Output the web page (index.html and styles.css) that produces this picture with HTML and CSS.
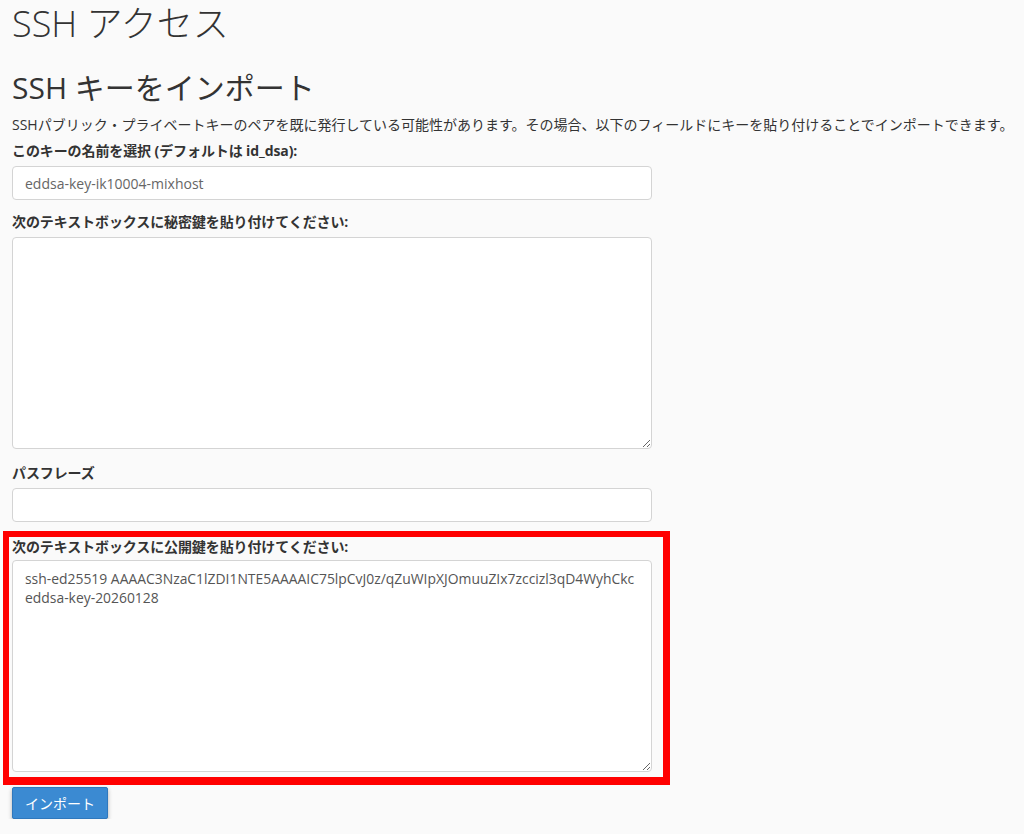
FILE: index.html
```html
<!DOCTYPE html>
<html lang="ja">
	<head>
		<meta charset="UTF-8">
		<meta name="viewport" content="width=device-width, initial-scale=1">
		<link rel="stylesheet" href="styles.css">
	</head>

	<body>
		<div class="page">
			<h1 class="pageTitle">SSH アクセス</h1>

			<h2 class="sectionTitle">SSH キーをインポート</h2>
			<p class="intro">SSHパブリック・プライベートキーのペアを既に発行している可能性があります。その場合、以下のフィールドにキーを貼り付けることでインポートできます。</p>

			<form class="importForm">
				<label class="fieldLabel" for="keyName">このキーの名前を選択 (デフォルトは id_dsa):</label>
				<input id="keyName" class="textInput" type="text" placeholder="eddsa-key-ik10004-mixhost">

				<label class="fieldLabel gapLarge" for="privateKey">次のテキストボックスに秘密鍵を貼り付けてください:</label>
				<textarea id="privateKey" class="textBox"></textarea>

				<label class="fieldLabel gapPass" for="passphrase">パスフレーズ</label>
				<input id="passphrase" class="textInput" type="password">

				<div class="highlight">
					<label class="fieldLabel" for="publicKey">次のテキストボックスに公開鍵を貼り付けてください:</label>
					<textarea id="publicKey" class="textBox textBoxInner">ssh-ed25519 AAAAC3NzaC1lZDI1NTE5AAAAIC75lpCvJ0z/qZuWIpXJOmuuZIx7zccizl3qD4WyhCkc
eddsa-key-20260128</textarea>
				</div>

				<button type="button" class="buttonImport">インポート</button>
			</form>
		</div>
	</body>
</html>
```

FILE: styles.css
```css
body {
	margin: 0;
	background-color: #fafafa;
	color: #333;
	font-family: "Open Sans", "Noto Sans CJK JP", sans-serif;
	font-size: 14px;
}

.page {
	padding: 0 12px;
}

/*---------------------------HEADINGS---------------------------*/
.pageTitle {
	margin: 2px 0 0 0;
	font-size: 36px;
	font-weight: 300;
	line-height: 44px;
	color: #333;
}

.sectionTitle {
	margin: 22px 0 0 0;
	font-size: 30px;
	font-weight: 400;
	line-height: 40px;
	color: #333;
}

.intro {
	margin: 7px 0 0 0;
	line-height: 20px;
	white-space: nowrap;
}

/*---------------------------FORM---------------------------*/
.importForm {
	display: flex;
	flex-direction: column;
	align-items: flex-start;
	width: 640px;
}

.fieldLabel {
	display: block;
	margin-top: 6px;
	font-weight: 700;
	line-height: 20px;
	letter-spacing: -0.1px;
}

.gapLarge {
	margin-top: 12px;
}

.gapPass {
	margin-top: 14px;
}

.textInput {
	margin-top: 5px;
	width: 640px;
	height: 34px;
	padding: 6px 12px;
	box-sizing: border-box;
	border: 1px solid #d4d4d4;
	border-radius: 4px;
	background-color: #fff;
	color: #555;
	font-family: inherit;
	font-size: 14px;
}

.textInput::placeholder {
	color: #666;
}

.textBox {
	margin-top: 5px;
	width: 640px;
	height: 212px;
	padding: 8px 12px;
	box-sizing: border-box;
	border: 1px solid #d4d4d4;
	border-radius: 4px;
	background-color: #fff;
	color: #555;
	font-family: inherit;
	font-size: 13.9px;
	line-height: 19px;
	resize: vertical;
}

/* red annotation frame round the public key */
.highlight {
	margin: 9px 0 0 -9px;
	padding: 0 11px 5px 3px;
	border-style: solid;
	border-color: #ff0000;
	border-width: 6px 7px 8px 6px;
}

.highlight .fieldLabel {
	margin-top: 0;
}

.textBoxInner {
	margin-top: 3px;
	display: block;
}

.buttonImport {
	margin-top: 2px;
	height: 32px;
	padding: 0 12px;
	background-color: #3b8ad2;
	border: 1px solid #2f78bd;
	border-radius: 2px;
	color: #fff;
	font-family: inherit;
	font-size: 14px;
	box-shadow: 0 2px 4px rgba(0,0,0,0.3);
	cursor: pointer;
}
```
